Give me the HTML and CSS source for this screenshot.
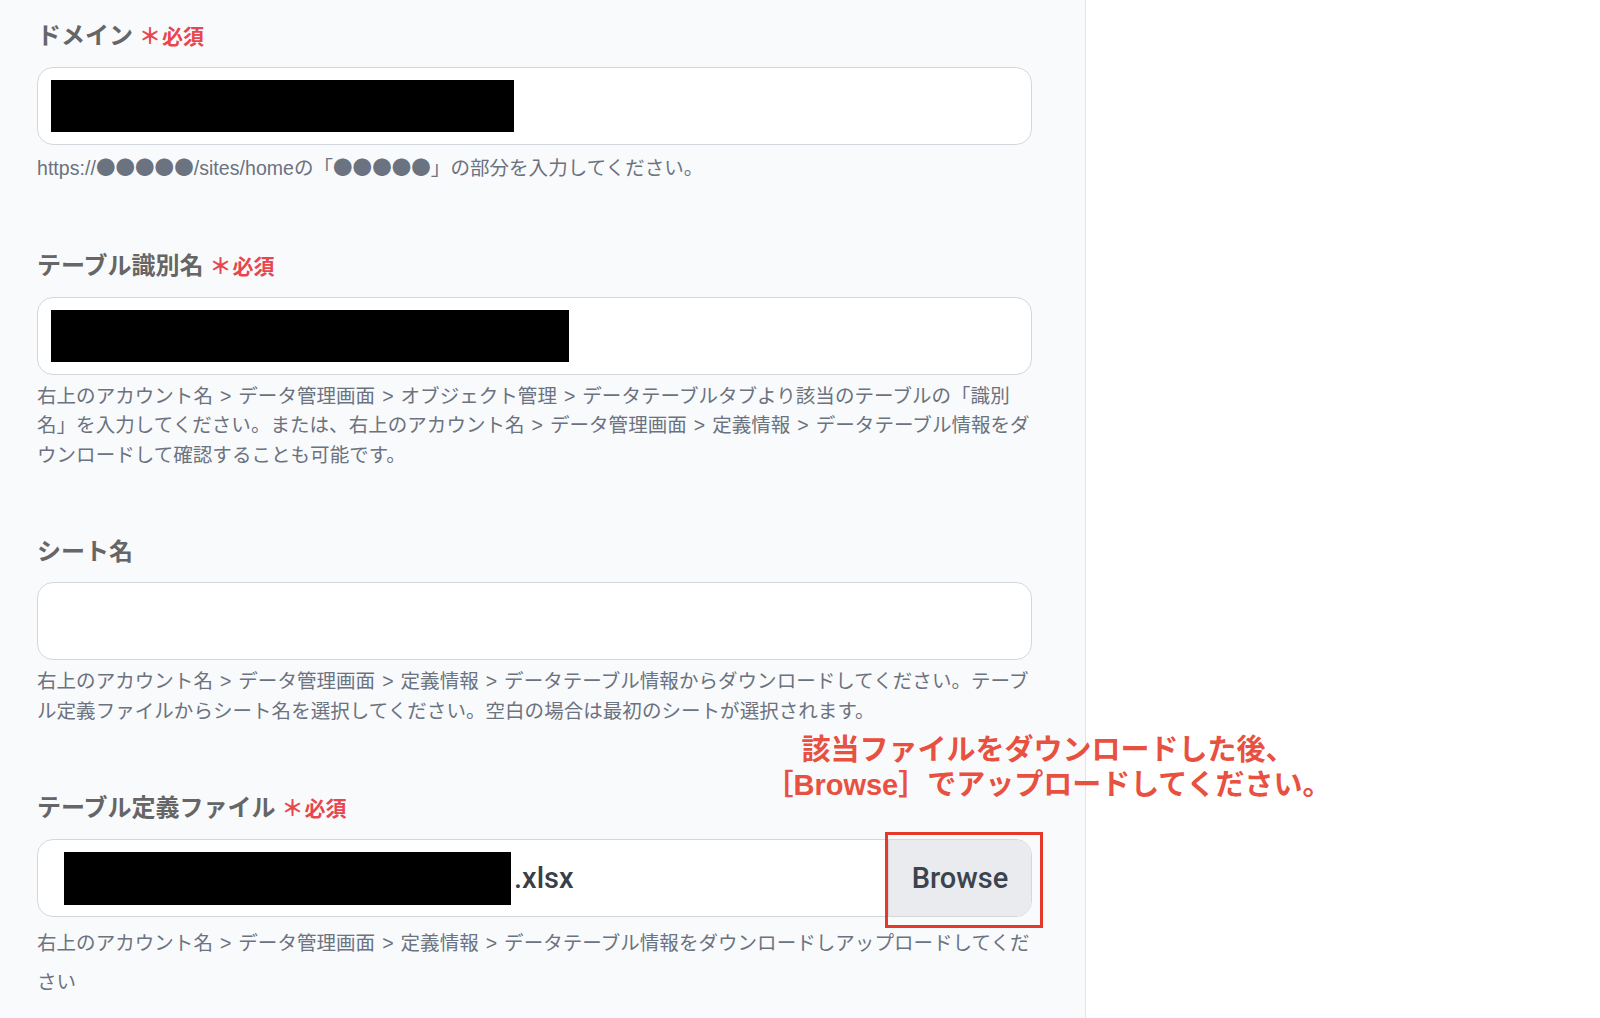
FILE: index.html
```html
<!DOCTYPE html>
<html lang="ja">
<head>
  <meta charset="UTF-8">
  <meta name="viewport" content="width=device-width, initial-scale=1.0">
  <title>テーブル設定</title>
  <link rel="stylesheet" href="styles.css">
</head>
<body>
  <div class="page">
    <div class="form-panel">
      <!-- Domain -->
      <div class="field">
        <div class="label">ドメイン<span class="required"><span class="mark">＊</span>必須</span></div>
        <div class="input"><span class="redact redact-domain"></span></div>
        <p class="help">https://<span class="dots">●●●●●</span>/sites/homeの「<span class="dots">●●●●●</span>」の部分を入力してください。</p>
      </div>

      <!-- Table id -->
      <div class="field">
        <div class="label">テーブル識別名<span class="required"><span class="mark">＊</span>必須</span></div>
        <div class="input"><span class="redact redact-table"></span></div>
        <p class="help">右上のアカウント名 &gt; データ管理画面 &gt; オブジェクト管理 &gt; データテーブルタブより該当のテーブルの「識別名」を入力してください。または、右上のアカウント名 &gt; データ管理画面 &gt; 定義情報 &gt; データテーブル情報をダウンロードして確認することも可能です。</p>
      </div>

      <!-- Sheet name -->
      <div class="field">
        <div class="label">シート名</div>
        <div class="input"></div>
        <p class="help">右上のアカウント名 &gt; データ管理画面 &gt; 定義情報 &gt; データテーブル情報からダウンロードしてください。テーブル定義ファイルからシート名を選択してください。空白の場合は最初のシートが選択されます。</p>
      </div>

      <!-- Definition file -->
      <div class="field">
        <div class="label">テーブル定義ファイル<span class="required"><span class="mark">＊</span>必須</span></div>
        <div class="file-input">
          <div class="file-name"><span class="redact redact-file"></span>.xlsx</div>
          <button class="browse" type="button">Browse</button>
          <span class="highlight"></span>
        </div>
        <p class="help help-loose">右上のアカウント名 &gt; データ管理画面 &gt; 定義情報 &gt; データテーブル情報をダウンロードしアップロードしてください</p>
      </div>

      <p class="callout">該当ファイルをダウンロードした後、<br>［Browse］でアップロードしてください。</p>
    </div>
  </div>
</body>
</html>
```

FILE: styles.css
```css
/* General Styling */
body {
  margin: 0;
  background-color: #fff;
  font-family: "Liberation Sans", "Noto Sans CJK JP", sans-serif;
}

.page {
  display: flex;
  height: 1018px;
}

/* Form panel */
.form-panel {
  position: relative;
  width: 1086px;
  padding: 17px 53px 0 37px;
  box-sizing: border-box;
  background-color: #f9fafb;
  border-right: 1px solid #e1e4e9;
}

.field {
  margin-bottom: 63px;
}

.label {
  font-family: "Noto Sans CJK JP", sans-serif;
  font-size: 24px;
  font-weight: bold;
  line-height: 34px;
  color: #666;
  margin-bottom: 15px;
}

.required {
  margin-left: 6px;
  font-size: 21px;
  font-weight: bold;
  color: #e8464f;
}

.required .mark {
  font-size: 22px;
  margin-right: 1px;
}

/* Inputs */
.input,
.file-input {
  display: flex;
  align-items: center;
  height: 78px;
  box-sizing: border-box;
  border: 1.5px solid #d3d8df;
  border-radius: 16px;
  background-color: #fff;
  margin-bottom: 7px;
}

.input {
  padding-left: 13px;
}

.redact {
  display: inline-block;
  height: 52px;
  background-color: #000;
}

.redact-domain {
  width: 463px;
}

.redact-table {
  width: 518px;
}

.redact-file {
  width: 447px;
  height: 53px;
}

.file-input {
  position: relative;
}

.file-name {
  flex-grow: 1;
  display: flex;
  align-items: center;
  padding-left: 26px;
  font-family: Roboto, "Liberation Sans", sans-serif;
  font-size: 29px;
  font-weight: 500;
  color: #3a3f47;
}

.file-name .redact {
  margin-right: 3px;
}

.browse {
  width: 143px;
  height: 100%;
  border: none;
  border-left: 1.5px solid #d3d8df;
  border-radius: 0 15px 15px 0;
  background-color: #e9ebef;
  font-family: Roboto, "Liberation Sans", sans-serif;
  font-size: 29px;
  font-weight: 500;
  color: #3d434c;
  padding: 0;
}

.highlight {
  position: absolute;
  left: 847px;
  top: -8px;
  width: 158px;
  height: 96px;
  box-sizing: border-box;
  border: 3px solid #e5392a;
}

/* Help texts */
.help {
  margin: 0;
  font-size: 19.5px;
  line-height: 29.5px;
  letter-spacing: 0.05px;
  word-spacing: 1.5px;
  color: #6b7280;
}

.help .dots {
  font-family: "Noto Sans CJK JP", sans-serif;
}

.help-loose {
  line-height: 39px;
}

/* Annotation */
.callout {
  position: absolute;
  left: 728px;
  top: 733px;
  width: 640px;
  margin: 0;
  text-align: center;
  font-family: "Liberation Sans", "Noto Sans CJK JP", sans-serif;
  font-size: 29px;
  font-weight: bold;
  line-height: 35px;
  color: #e8503f;
}
```
